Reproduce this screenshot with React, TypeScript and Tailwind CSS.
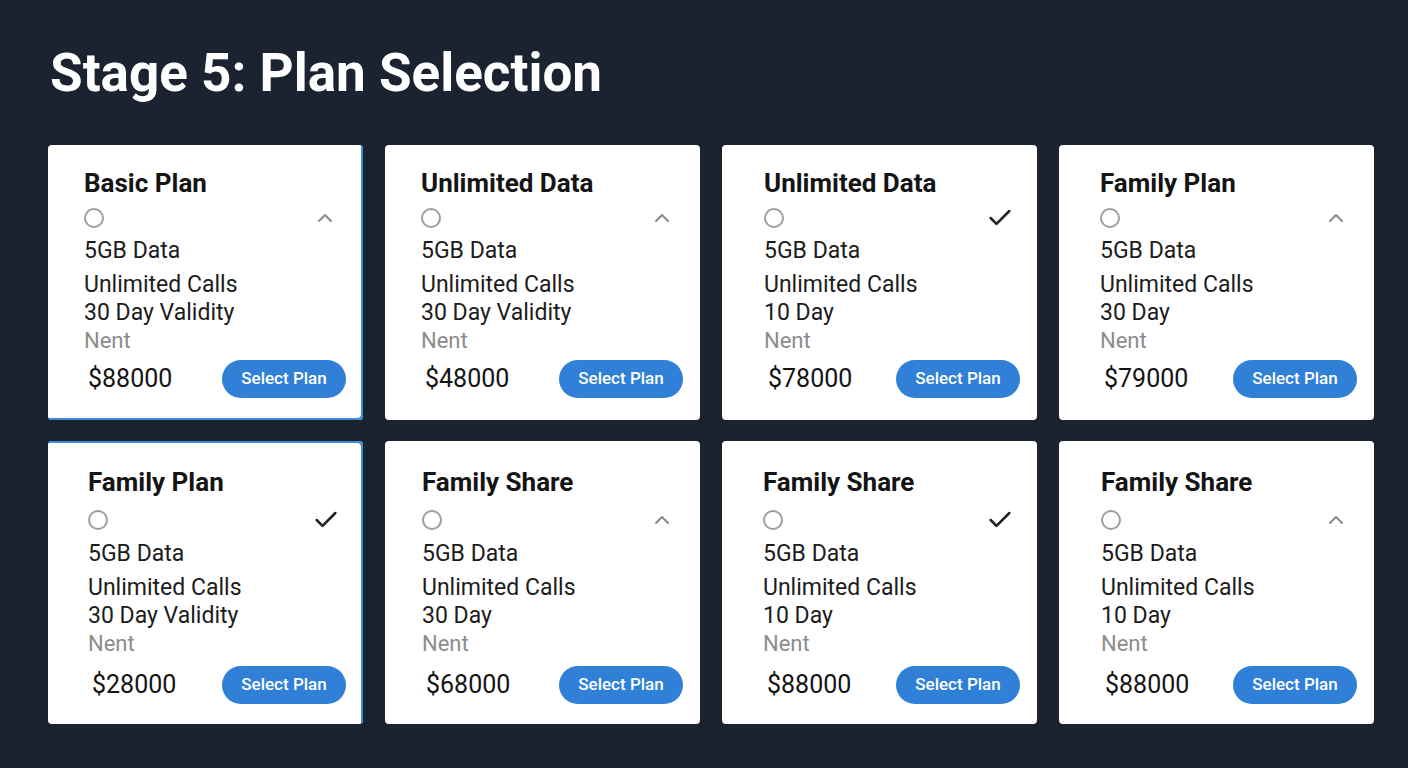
import { Check, ChevronUp } from "lucide-react";

type Plan = {
  name: string;
  validity: string;
  price: string;
  pad: string;
  checked?: boolean;
  highlight?: "br" | "tr";
};

const plans: Plan[] = [
  { name: "Basic Plan", validity: "30 Day Validity", price: "$88000", pad: "pl-9", highlight: "br" },
  { name: "Unlimited Data", validity: "30 Day Validity", price: "$48000", pad: "pl-[36px]" },
  { name: "Unlimited Data", validity: "10 Day", price: "$78000", pad: "pl-[42px]", checked: true },
  { name: "Family Plan", validity: "30 Day", price: "$79000", pad: "pl-[41px]" },
  { name: "Family Plan", validity: "30 Day Validity", price: "$28000", pad: "pl-10", checked: true, highlight: "tr" },
  { name: "Family Share", validity: "30 Day", price: "$68000", pad: "pl-[37px]" },
  { name: "Family Share", validity: "10 Day", price: "$88000", pad: "pl-[41px]", checked: true },
  { name: "Family Share", validity: "10 Day", price: "$88000", pad: "pl-[42px]" },
];

function PlanCard({ plan, tall }: { plan: Plan; tall: boolean }) {
  const edge =
    plan.highlight === "br"
      ? "shadow-[inset_-2px_-2px_0_#3f8ad8]"
      : plan.highlight === "tr"
        ? "shadow-[inset_-2px_2px_0_#3f8ad8]"
        : "";

  return (
    <div
      className={`flex flex-col rounded-[4px] bg-white pr-[17px] ${plan.pad} ${
        tall ? "pt-[26px] pb-[20px]" : "pt-[23px] pb-[22px]"
      } ${edge}`}
    >
      <h2 className="text-[26px] font-bold leading-[30px] text-[#141414]">{plan.name}</h2>

      <div
        className={`flex h-6 items-center justify-between ${plan.checked ? "pr-[6px]" : "pr-[9px]"} ${
          tall ? "mt-[11px]" : "mt-2"
        }`}
      >
        <span className="h-5 w-5 rounded-full border-2 border-[#9e9e9e]" />
        {plan.checked ? (
          <Check className="h-7 w-7 text-[#222]" strokeWidth={2.2} />
        ) : (
          <ChevronUp className="h-6 w-6 text-[#8a8a8a]" strokeWidth={2} />
        )}
      </div>

      <div className={`text-[23px] leading-[28px] text-[#1c1c1c] ${tall ? "mt-2" : "mt-[7px]"}`}>
        <p className="mb-[6px]">5GB Data</p>
        <p>Unlimited Calls</p>
        <p>{plan.validity}</p>
        <p className="text-[22px] text-[#8c8c8c]">Nent</p>
      </div>

      <div className={`flex h-[38px] items-center justify-between ${tall ? "mt-2" : "mt-[5px]"}`}>
        <span className="pl-1 text-[25px] text-[#141414]">{plan.price}</span>
        <button className="h-[38px] w-[124px] rounded-full bg-[#2f80d6] text-[17px] font-medium text-white">
          Select Plan
        </button>
      </div>
    </div>
  );
}

export default function App() {
  return (
    <div
      className="min-h-screen w-full bg-[#1b2230] px-12 pt-[43px]"
      style={{ fontFamily: "Roboto, 'Liberation Sans', sans-serif" }}
    >
      <h1 className="pl-[2px] text-[53px] font-bold leading-[60px] text-white">
        Stage 5: Plan Selection
      </h1>

      <div className="mt-[42px] grid w-[1326px] grid-cols-4 gap-x-[22px] gap-y-[21px]">
        {plans.map((p, i) => (
          <PlanCard key={i} plan={p} tall={i >= 4} />
        ))}
      </div>
    </div>
  );
}
